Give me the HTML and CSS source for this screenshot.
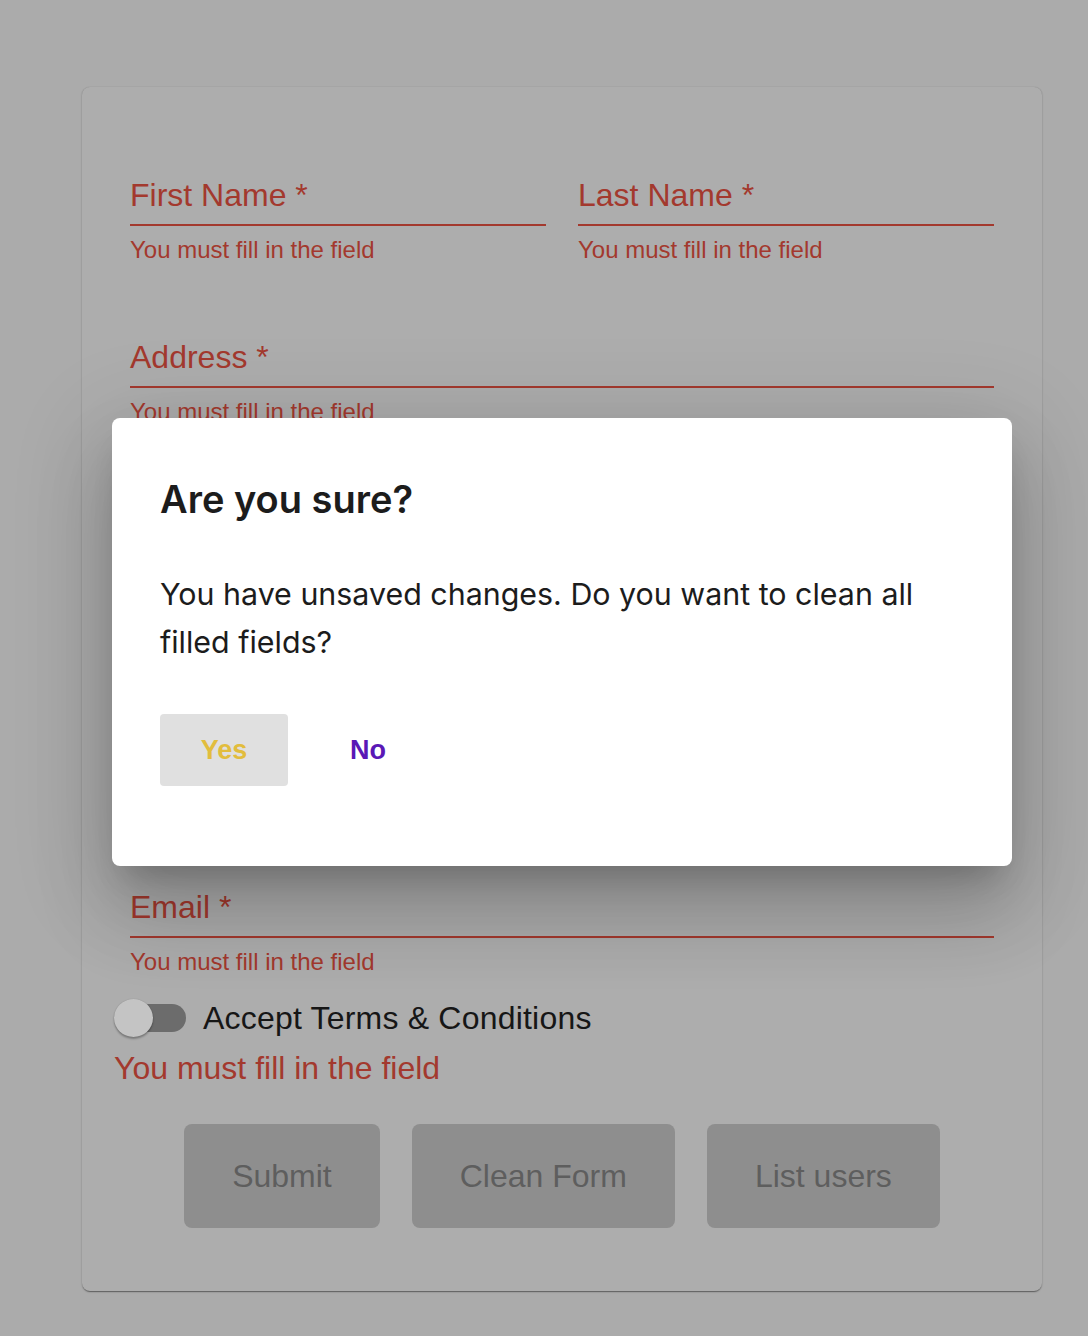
FILE: index.html
```html
<!DOCTYPE html>
<html lang="en">
<head>
<meta charset="utf-8">
<title>Form</title>
<link rel="stylesheet" href="styles.css">
</head>
<body>
<div class="page">
  <form class="card">
    <div class="row two">
      <div class="field">
        <div class="label">First Name *</div>
        <div class="helper">You must fill in the field</div>
      </div>
      <div class="field">
        <div class="label">Last Name *</div>
        <div class="helper">You must fill in the field</div>
      </div>
    </div>
    <div class="row">
      <div class="field">
        <div class="label">Address *</div>
        <div class="helper">You must fill in the field</div>
      </div>
    </div>
    <div class="row two">
      <div class="field">
        <div class="label">City *</div>
        <div class="helper">You must fill in the field</div>
      </div>
      <div class="field">
        <div class="label">Zip Code *</div>
        <div class="helper">You must fill in the field</div>
      </div>
    </div>
    <div class="row tall">
      <div class="field">
        <div class="label">Phone *</div>
        <div class="helper">You must fill in the field</div>
      </div>
    </div>
    <div class="row last">
      <div class="field">
        <div class="label">Email *</div>
        <div class="helper">You must fill in the field</div>
      </div>
    </div>
    <label class="switch-row">
      <span class="switch"><span class="track"></span><span class="thumb"></span></span>
      <span class="switch-text">Accept Terms &amp; Conditions</span>
    </label>
    <div class="big-error">You must fill in the field</div>
    <div class="actions">
      <button type="button" class="btn">Submit</button>
      <button type="button" class="btn">Clean Form</button>
      <button type="button" class="btn">List users</button>
    </div>
  </form>
</div>

<div class="dialog" role="dialog">
  <h2 class="dialog-title">Are you sure?</h2>
  <p class="dialog-body">You have unsaved changes. Do you want to clean all filled fields?</p>
  <div class="dialog-actions">
    <button type="button" class="dbtn yes">Yes</button>
    <button type="button" class="dbtn no">No</button>
  </div>
</div>
</body>
</html>
```

FILE: styles.css
```css
* { box-sizing: border-box; }

html, body {
  margin: 0;
  padding: 0;
}

body {
  background: #ababab;
  font-family: "Liberation Sans", Arial, sans-serif;
  width: 1088px;
  min-height: 1336px;
}

.page {
  padding: 87px 46px 44px 82px;
}

.card {
  width: 960px;
  background: #adadad;
  border-radius: 8px;
  box-shadow: 0 2px 1px -1px rgba(0,0,0,0.3), 0 1px 2px rgba(0,0,0,0.2), 0 0 1px rgba(0,0,0,0.2);
  padding: 88px 48px 63px 48px;
}

.row {
  display: flex;
  gap: 32px;
  margin-bottom: 71px;
}

.row.tall {
  margin-bottom: 135px;
}

.row.last {
  margin-bottom: 0;
}

.field {
  flex: 1;
}

.label {
  font-size: 32px;
  line-height: 40px;
  color: #a3392e;
  padding-bottom: 9px;
  border-bottom: 2px solid #a3392e;
}

.helper {
  margin-top: 8px;
  font-size: 24px;
  line-height: 32px;
  color: #a3392e;
}

.switch-row {
  display: flex;
  align-items: center;
  margin: 20px 0 0 -16px;
  height: 40px;
}

.switch {
  position: relative;
  width: 72px;
  height: 40px;
  flex: none;
}

.track {
  position: absolute;
  left: 2px;
  top: 6px;
  width: 70px;
  height: 28px;
  border-radius: 14px;
  background: #6c6c6c;
}

.thumb {
  position: absolute;
  left: 0;
  top: 1px;
  width: 39px;
  height: 38px;
  border-radius: 50%;
  background: #c4c4c4;
  box-shadow: 0 2px 2px rgba(0,0,0,0.28), 0 0 1px rgba(0,0,0,0.25);
}

.switch-text {
  margin-left: 17px;
  font-size: 32px;
  line-height: 40px;
  color: #161616;
  letter-spacing: 0.2px;
}

.big-error {
  margin: 10px 0 0 -16px;
  font-size: 32px;
  line-height: 40px;
  color: #a3392e;
}

.actions {
  display: flex;
  justify-content: center;
  gap: 32px;
  margin-top: 36px;
}

.btn {
  height: 104px;
  padding: 0 48px;
  border: none;
  border-radius: 8px;
  background: #8e8e8e;
  color: #5e5e5e;
  font-family: "Liberation Sans", Arial, sans-serif;
  font-size: 32px;
}

.dialog {
  position: absolute;
  left: 112px;
  top: 418px;
  width: 900px;
  height: 448px;
  background: #ffffff;
  border-radius: 8px;
  padding: 0 48px 80px 48px;
  box-shadow: 0 22px 30px -14px rgba(0,0,0,0.2), 0 48px 76px 6px rgba(0,0,0,0.14), 0 18px 92px 16px rgba(0,0,0,0.12);
  font-family: Inter, "Liberation Sans", sans-serif;
}

.dialog-title {
  margin: 57px 0 0 0;
  font-size: 38px;
  line-height: 48px;
  font-weight: 600;
  color: #1c1c1c;
}

.dialog-body {
  margin: 47px 0 0 0;
  font-size: 30.4px;
  line-height: 48px;
  color: #1c1c1c;
}

.dialog-actions {
  display: flex;
  gap: 16px;
  margin-top: 48px;
}

.dbtn {
  width: 128px;
  height: 72px;
  border: none;
  border-radius: 4px;
  background: transparent;
  font-family: "Liberation Sans", Arial, sans-serif;
  font-weight: 700;
  font-size: 27px;
}

.dbtn.yes {
  background: #e0e0e0;
  color: #e2bd3d;
}

.dbtn.no {
  color: #5a18b6;
}
```
